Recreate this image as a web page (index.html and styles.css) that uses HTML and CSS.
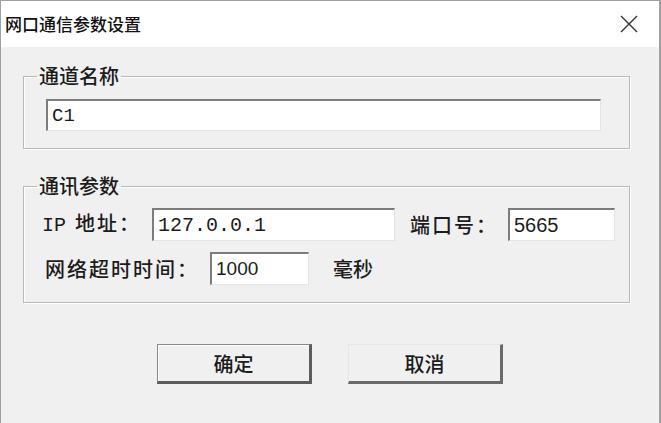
FILE: index.html
```html
<!DOCTYPE html>
<html>
<head>
    <title>网口通信参数设置</title>
    <link rel="stylesheet" href="styles.css">
</head>
<body>
    <div class="window">
        <div class="titlebar">
            <span class="title">网口通信参数设置</span>
            <svg class="close" width="18" height="18" viewBox="0 0 18 18">
                <path d="M1 1L17 17M17 1L1 17" stroke="#333" stroke-width="1.4" fill="none"/>
            </svg>
        </div>

        <fieldset class="group group-name">
            <legend>通道名称</legend>
            <input class="field field-name mono" type="text" value="C1">
        </fieldset>

        <fieldset class="group group-comm">
            <legend>通讯参数</legend>
            <div class="row">
                <span class="label label-ip"><span class="mono-label">IP</span>地址：</span>
                <input class="field field-ip mono" type="text" value="127.0.0.1">
                <span class="label label-port">端口号：</span>
                <input class="field field-port" type="text" value="5665">
            </div>
            <div class="row row-timeout">
                <span class="label label-timeout">网络超时时间：</span>
                <input class="field field-timeout" type="text" value="1000">
                <span class="label unit">毫秒</span>
            </div>
        </fieldset>

        <div class="actions">
            <button class="btn btn-default">确定</button>
            <button class="btn">取消</button>
        </div>
    </div>
</body>
</html>
```

FILE: styles.css
```css
body {
    margin: 0;
    padding: 0;
    background: #f0f0f0;
    font-family: "Noto Sans CJK SC", sans-serif;
    color: #1c1c1c;
}
.window {
    width: 661px;
    height: 423px;
    box-sizing: border-box;
    background: #f0f0f0;
    border: 1px solid #a0a0a0;
    border-bottom: none;
    border-right-width: 2px;
    overflow: hidden;
}
.titlebar {
    height: 46px;
    background: #fff;
    display: flex;
    align-items: center;
    justify-content: space-between;
    padding: 0 21px 0 4px;
}
.title {
    font-size: 17px;
    line-height: 20px;
    font-weight: 500;
    color: #111;
}
.close {
    display: block;
}
.group {
    width: 607px;
    box-sizing: border-box;
    margin: 17px 0 0 22px;
    border: 1px solid #b9b9b9;
    box-shadow: 1px 1px 0 #fff, inset 1px 1px 0 #fff;
    min-width: 0;
}
.group legend {
    padding: 0 2px;
    font-size: 20px;
    line-height: 24px;
    font-weight: 500;
}
.group-name {
    padding: 0 28px 17px 13px;
}
.group-comm {
    margin-top: 25px;
    padding: 0 10px 17px 13px;
}
.field {
    box-sizing: border-box;
    height: 32px;
    margin: 0;
    padding: 0 0 0 4px;
    background: #fff;
    border-top: 2px solid #7c7c7c;
    border-left: 2px solid #7c7c7c;
    border-right: 1px solid #e4e4e4;
    border-bottom: 1px solid #e4e4e4;
    outline: none;
    font-family: "Liberation Sans", sans-serif;
    font-size: 20px;
    color: #1c1c1c;
}
.mono {
    font-family: "Liberation Mono", monospace;
}
.field-name {
    display: block;
    width: 555px;
    margin: 11px 0 0 9px;
    font-size: 19px;
}
.row {
    display: flex;
    align-items: center;
    margin-top: 10px;
    padding-left: 5px;
}
.row .field {
    height: 33px;
}
.row-timeout {
    margin-top: 11px;
    padding-left: 8px;
}
.label {
    font-size: 20px;
    line-height: 24px;
    font-weight: 500;
    letter-spacing: 2px;
    white-space: nowrap;
}
.mono-label {
    font-family: "Liberation Mono", monospace;
    font-size: 20px;
    font-weight: 400;
    letter-spacing: 0;
    margin-right: 9px;
}
.label-ip {
    width: 110px;
}
.field-ip {
    width: 243px;
}
.label-port {
    width: 98px;
    margin-left: 15px;
}
.field-port {
    width: 107px;
}
.label-timeout {
    width: 165px;
}
.field-timeout {
    width: 99px;
    font-size: 19px;
}
.unit {
    margin-left: 24px;
    letter-spacing: 0;
}
.actions {
    display: flex;
    justify-content: center;
    gap: 36px;
    margin-top: 41px;
}
.btn {
    width: 155px;
    height: 40px;
    box-sizing: border-box;
    background: #f0f0f0;
    font-family: "Noto Sans CJK SC", sans-serif;
    font-size: 20px;
    font-weight: 500;
    color: #1c1c1c;
    padding: 0;
    border-top: 1px solid #e6e6e6;
    border-left: 1px solid #e6e6e6;
    border-right: 3px solid #6a6a6a;
    border-bottom: 3px solid #6a6a6a;
}
.btn-default {
    border-top-color: #8a8a8a;
    border-left-color: #8a8a8a;
    border-right-color: #5c5c5c;
    border-bottom-color: #5c5c5c;
    box-shadow: inset 1px 1px 0 #fff;
}
```
